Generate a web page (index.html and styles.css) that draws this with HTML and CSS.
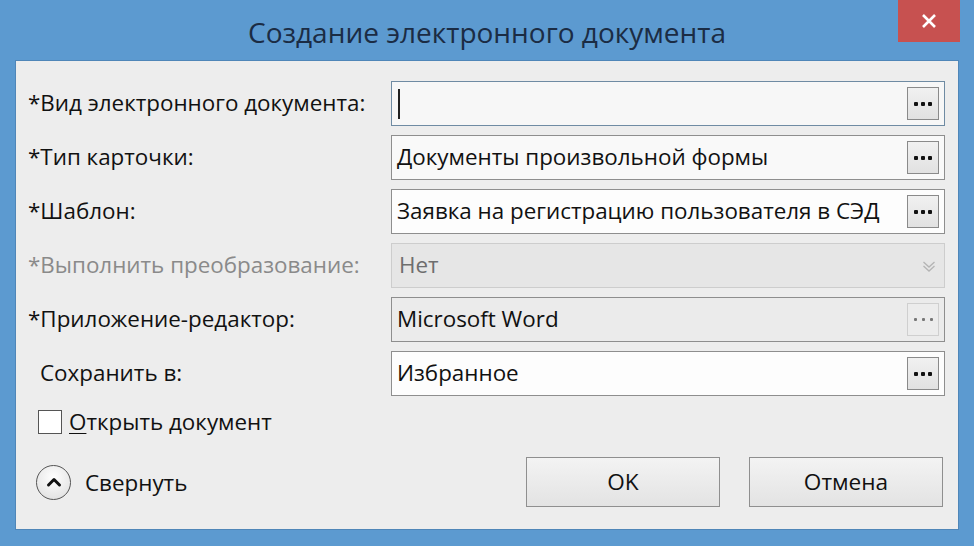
FILE: index.html
```html
<!DOCTYPE html>
<html>
<head>
	<meta charset="utf-8">
	<title>Создание электронного документа</title>
	<link rel="stylesheet" href="styles.css">
</head>
<body>
	<div class="window">
		<div class="titlebar">
			<div class="title">Создание электронного документа</div>
			<div class="close">
				<svg width="16" height="16" viewBox="0 0 16 16"><path d="M2 2 L14 14 M14 2 L2 14" stroke="#fff" stroke-width="2.6" fill="none"/></svg>
			</div>
		</div>

		<div class="client">
			<div class="form">
				<label class="label">*Вид электронного документа:</label>
				<div class="field focused">
					<span class="caret"></span>
					<span class="value"></span>
					<span class="dots"><i></i><i></i><i></i></span>
				</div>

				<label class="label">*Тип карточки:</label>
				<div class="field">
					<span class="value">Документы произвольной формы</span>
					<span class="dots"><i></i><i></i><i></i></span>
				</div>

				<label class="label">*Шаблон:</label>
				<div class="field white">
					<span class="value">Заявка на регистрацию пользователя в СЭД</span>
					<span class="dots"><i></i><i></i><i></i></span>
				</div>

				<label class="label disabled">*Выполнить преобразование:</label>
				<div class="field off">
					<span class="value">Нет</span>
					<svg class="chevron" width="14" height="14" viewBox="0 0 14 14"><path d="M1.5 3 L7 8 L12.5 3 M1.5 7 L7 12 L12.5 7" stroke="#b4b4b4" stroke-width="1.3" fill="none"/></svg>
				</div>

				<label class="label">*Приложение-редактор:</label>
				<div class="field grey">
					<span class="value">Microsoft Word</span>
					<span class="dots light"><i></i><i></i><i></i></span>
				</div>

				<label class="label plain">Сохранить в:</label>
				<div class="field white">
					<span class="value">Избранное</span>
					<span class="dots"><i></i><i></i><i></i></span>
				</div>
			</div>

			<div class="check-row">
				<span class="checkbox"></span>
				<span><u>О</u>ткрыть документ</span>
			</div>

			<div class="footer">
				<div class="collapse">
					<span class="round">
						<svg width="16" height="12" viewBox="0 0 16 12"><path d="M2.5 9 L8 3.5 L13.5 9" stroke="#111" stroke-width="3" fill="none" stroke-linecap="round" stroke-linejoin="round"/></svg>
					</span>
					<span>Свернуть</span>
				</div>
				<div class="buttons">
					<button type="button" class="btn">OK</button>
					<button type="button" class="btn">Отмена</button>
				</div>
			</div>
		</div>
	</div>
</body>
</html>
```

FILE: styles.css
```css
body {
	margin: 0;
	padding: 0;
	font-family: "Open Sans", "Noto Sans", sans-serif;
}

.window {
	width: 974px;
	height: 546px;
	box-sizing: border-box;
	background-color: #5c9ad0;
	padding: 0 15px 16px 15px;
	display: flex;
	flex-direction: column;
}

.titlebar {
	height: 60px;
	display: grid;
	grid-template-columns: 1fr auto 1fr;
}

.title {
	grid-column: 2;
	align-self: center;
	font-size: 28px;
	color: #1b2c44;
	margin-top: 3px;
}

.close {
	grid-column: 3;
	justify-self: end;
	align-self: start;
	margin-right: -1px;
	width: 62px;
	height: 42px;
	background-color: #c75150;
	display: flex;
	align-items: center;
	justify-content: center;
}

.client {
	flex: 1;
	background-color: #ededed;
	border: 1px solid #4f86b8;
	padding: 20px 13px 0 12px;
	display: flex;
	flex-direction: column;
}

.form {
	display: grid;
	grid-template-columns: 363px 554px;
	grid-auto-rows: 45px;
	row-gap: 9px;
}

.label {
	align-self: center;
	font-size: 22.4px;
	color: #111;
	white-space: nowrap;
	margin-bottom: 2px;
}

.label.disabled {
	color: #8a8a8a;
}

.label.plain {
	padding-left: 12px;
}

.field {
	display: flex;
	align-items: center;
	box-sizing: border-box;
	border: 1px solid #8e8e8e;
	background-color: #f9f9f9;
	padding: 0 5px 0 5px;
	font-size: 22.4px;
	color: #111;
}

.field .value {
	flex: 1;
	white-space: nowrap;
	margin-bottom: 2px;
}

.field.focused {
	border-color: #6f8ba3;
	background-color: #f7f7f7;
}

.field.white {
	background-color: #fdfdfd;
}

.field.grey {
	background-color: #ebebeb;
}

.field.off {
	border-color: #cdcdcd;
	background-color: #e6e6e6;
	color: #6e6e6e;
	padding-left: 7px;
	padding-right: 8px;
}

.caret {
	width: 2px;
	height: 30px;
	background-color: #222;
	margin-left: 1px;
}

.dots {
	width: 32px;
	height: 33px;
	box-sizing: border-box;
	border: 1px solid #8a8a8a;
	background: linear-gradient(#f1f1f1, #e1e1e1);
	display: flex;
	align-items: center;
	justify-content: center;
	gap: 3px;
}

.dots i {
	width: 4px;
	height: 4px;
	background-color: #111;
	border-radius: 1px;
}

.dots.light {
	border-color: #cfcfcf;
	background: #ececec;
	gap: 5px;
}

.dots.light i {
	width: 3px;
	height: 3px;
	background-color: #777;
}

.check-row {
	display: flex;
	align-items: center;
	gap: 7px;
	margin-top: 10px;
	padding-left: 10px;
	font-size: 22.4px;
	color: #111;
}

.checkbox {
	width: 22px;
	height: 22px;
	border: 1px solid #555;
	background-color: #fff;
}

.check-row u {
	text-decoration-thickness: 1px;
	text-underline-offset: 3px;
}

.footer {
	display: flex;
	justify-content: space-between;
	align-items: center;
	margin-top: 20px;
}

.collapse {
	display: flex;
	align-items: center;
	gap: 14px;
	padding-left: 8px;
	font-size: 22.4px;
	color: #111;
}

.round {
	width: 35px;
	height: 35px;
	box-sizing: border-box;
	border: 1px solid #555;
	border-radius: 50%;
	background: radial-gradient(circle at 50% 35%, #ffffff, #dcdcdc);
	display: flex;
	align-items: center;
	justify-content: center;
}

.buttons {
	display: flex;
	gap: 29px;
	margin-right: 2px;
}

.btn {
	width: 194px;
	height: 50px;
	border: 1px solid #8f8f8f;
	background: linear-gradient(#f3f3f3, #e3e3e3);
	font-family: "Open Sans", "Noto Sans", sans-serif;
	font-size: 22.6px;
	color: #111;
	padding: 0 0 2px 0;
}
```
